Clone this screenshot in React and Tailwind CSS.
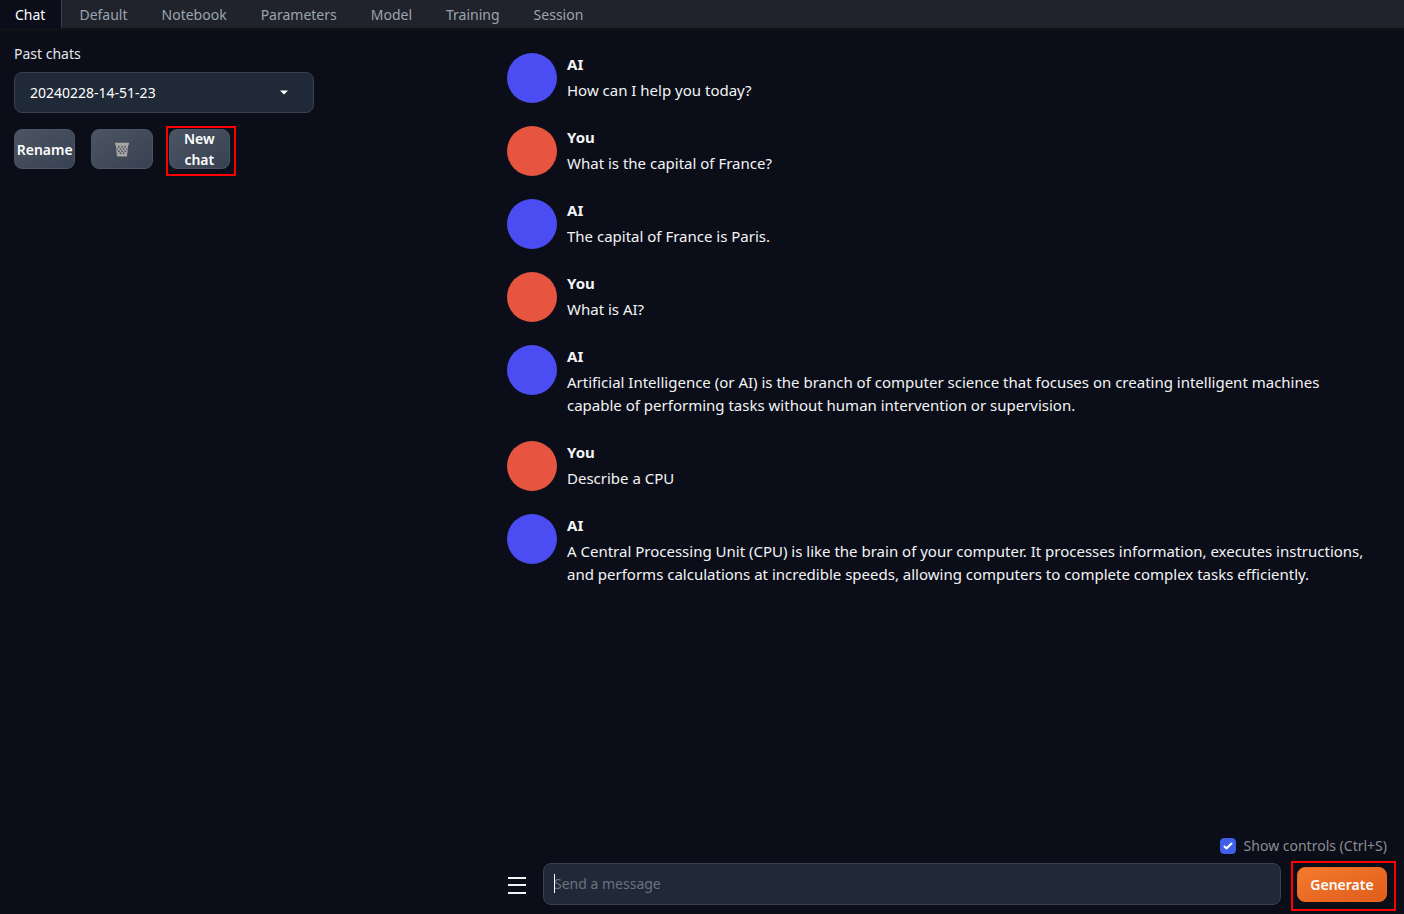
const tabs = ["Chat", "Default", "Notebook", "Parameters", "Model", "Training", "Session"];

const messages = [
  { from: "AI", text: "How can I help you today?" },
  { from: "You", text: "What is the capital of France?" },
  { from: "AI", text: "The capital of France is Paris." },
  { from: "You", text: "What is AI?" },
  {
    from: "AI",
    text: "Artificial Intelligence (or AI) is the branch of computer science that focuses on creating intelligent machines capable of performing tasks without human intervention or supervision.",
  },
  { from: "You", text: "Describe a CPU" },
  {
    from: "AI",
    text: "A Central Processing Unit (CPU) is like the brain of your computer. It processes information, executes instructions, and performs calculations at incredible speeds, allowing computers to complete complex tasks efficiently.",
  },
];

function Tabs() {
  return (
    <nav className="flex h-7 bg-[#20232b] text-sm">
      {tabs.map((tab, i) => (
        <button
          key={tab}
          type="button"
          className={
            i === 0
              ? "border-r border-[#374151] bg-[#0b0e18] pr-4 pl-[15px] pt-0.5 text-white"
              : "px-[17px] pt-0.5 text-[#9ca3af]"
          }
        >
          {tab}
        </button>
      ))}
    </nav>
  );
}

function TrashIcon() {
  return (
    <svg className="h-[15px] w-[14px]" viewBox="0 0 14 15" aria-hidden="true">
      <path d="M0.6 1.5 L2 14 H12 L13.4 1.5 Z" fill="#a3a3a3" />
      <path
        d="M3.2 4h1.4v1.6H3.2zM6.3 4h1.4v1.6H6.3zM9.4 4h1.4v1.6H9.4zM4.8 6.3h1.3v1.5H4.8zM7.9 6.3h1.3v1.5H7.9zM3.2 8.4h1.4v1.6H3.2zM6.3 8.4h1.4v1.6H6.3zM9.4 8.4h1.4v1.6H9.4zM4.8 10.6h1.3v1.3H4.8zM7.9 10.6h1.3v1.3H7.9zM1.8 6.3h1v1.5h-1zM11.2 6.3h1v1.5h-1z"
        fill="#414b5a"
      />
      <path d="M0 0.8 H14 V2.8 H0 Z M2 12.6 H12 L11.8 14.4 H2.2 Z" fill="#a8a6a4" />
    </svg>
  );
}

const grayButton =
  "flex h-10 w-full items-center justify-center rounded-lg border border-[#4b5563] bg-linear-to-br from-[#4b5563] to-[#374151] text-sm leading-[21px] font-semibold text-white";

function Sidebar() {
  return (
    <aside className="w-[507px] shrink-0 pt-[13px] pl-3.5">
      <div className="w-[300px]">
        <label htmlFor="past-chats" className="block text-sm leading-5 text-[#e5e7eb]">
          Past chats
        </label>
        <div className="relative mt-2">
          <select
            id="past-chats"
            className="block h-[41px] w-full appearance-none rounded-lg border border-[#374151] bg-[#1f2937] px-[15px] text-sm text-white"
          >
            <option>20240228-14-51-23</option>
          </select>
          <svg
            className="pointer-events-none absolute top-[18px] right-[26px] h-[5px] w-2"
            viewBox="0 0 8 5"
            aria-hidden="true"
          >
            <path d="M0 0.5 H8 L4 4.5 Z" fill="#fff" />
          </svg>
        </div>
        <div className="mt-4 grid w-[216px] grid-cols-3 gap-4">
          <button type="button" className={grayButton}>
            Rename
          </button>
          <button type="button" aria-label="Delete chat" className={grayButton}>
            <TrashIcon />
          </button>
          <div className="relative">
            <button type="button" className={grayButton}>
              New
              <br />
              chat
            </button>
            <span className="pointer-events-none absolute -top-[3px] -right-[6px] -bottom-[7px] -left-[3px] border-2 border-[#ff0000]" />
          </div>
        </div>
      </div>
    </aside>
  );
}

function Message({ from, text }) {
  return (
    <li className="flex gap-[10px]">
      <span
        className={
          from === "AI"
            ? "size-[50px] shrink-0 rounded-full bg-[#4c4cf3]"
            : "size-[50px] shrink-0 rounded-full bg-[#e75541]"
        }
      />
      <div className="text-[15px] leading-[23px] text-[#f3f4f6]">
        <div className="font-bold">{from}</div>
        <p className="pt-[3px] pb-px">{text}</p>
      </div>
    </li>
  );
}

function Composer() {
  return (
    <form className="flex flex-col" onSubmit={(e) => e.preventDefault()}>
      <label className="flex items-center gap-2 self-end text-sm leading-5 text-[#8b8d92]">
        <span className="relative flex">
          <input
            type="checkbox"
            defaultChecked
            className="peer size-4 appearance-none rounded-sm border border-[#374151] bg-[#1f2937] checked:border-[#3f5fe6] checked:bg-[#3f5fe6]"
          />
          <svg
            className="pointer-events-none absolute inset-0 hidden size-4 peer-checked:block"
            viewBox="0 0 16 16"
            fill="#fff"
            aria-hidden="true"
          >
            <path d="M12.207 4.793a1 1 0 010 1.414l-5 5a1 1 0 01-1.414 0l-2-2a1 1 0 011.414-1.414L6.5 9.086l4.293-4.293a1 1 0 011.414 0z" />
          </svg>
        </span>
        Show controls (Ctrl+S)
      </label>
      <div className="mt-[7px] flex items-center">
        <button type="button" aria-label="Menu" className="mt-0.5 mr-[17px] ml-px">
          <svg className="h-[18px] w-[18px]" viewBox="0 0 18 18" fill="#f3f4f6" aria-hidden="true">
            <path d="M0 1h18v2H0zM0 8h18v2H0zM0 16h18v2H0z" />
          </svg>
        </button>
        <div className="relative flex-1">
          <input
            type="text"
            aria-label="Message"
            placeholder="Send a message"
            className="block h-[42px] w-full rounded-lg border border-[#374151] bg-[#1f2937] px-[10px] pb-0.5 text-sm text-white placeholder:text-[#6b7280]"
          />
          <span className="pointer-events-none absolute top-[11px] left-[11px] h-[19px] w-px bg-white" />
        </div>
        <div className="relative ml-4">
          <button
            type="submit"
            className="block h-[35px] w-[90px] rounded-lg border border-[#ea6a20] bg-linear-to-br from-[#f47a2c] to-[#e05c1c] text-sm leading-[21px] font-semibold text-white"
          >
            Generate
          </button>
          <span className="pointer-events-none absolute -top-[6px] -right-[9px] -bottom-[9px] -left-[6px] border-2 border-[#ff0000]" />
        </div>
      </div>
    </form>
  );
}

export default function App() {
  return (
    <div className="flex min-h-screen flex-col bg-[#0b0e18] font-['Noto_Sans',sans-serif]">
      <Tabs />
      <div className="h-[3px] bg-[#111215]" />
      <div className="flex flex-1">
        <Sidebar />
        <main className="flex min-w-0 flex-1 flex-col pt-[22px] pr-[17px] pb-[9px]">
          <ul className="flex flex-1 flex-col gap-[23px] pr-4">
            {messages.map((message, i) => (
              <Message key={i} from={message.from} text={message.text} />
            ))}
          </ul>
          <Composer />
        </main>
      </div>
    </div>
  );
}
